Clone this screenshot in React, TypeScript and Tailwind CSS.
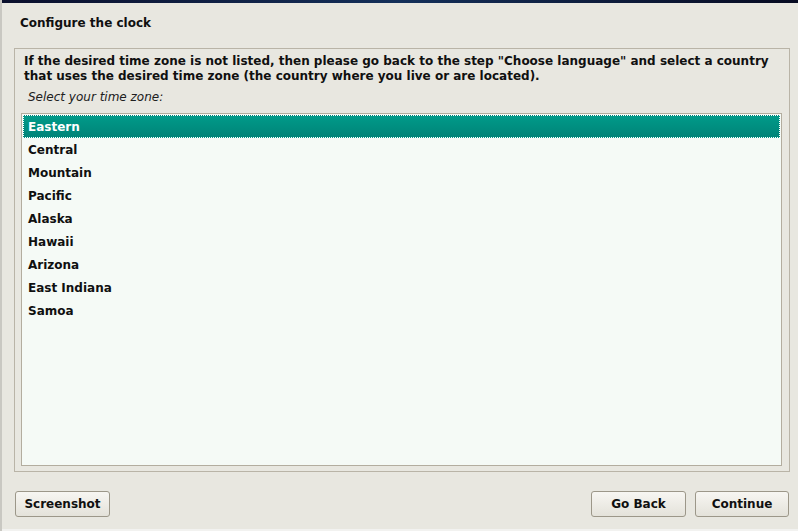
const ZONES = [
  "Eastern",
  "Central",
  "Mountain",
  "Pacific",
  "Alaska",
  "Hawaii",
  "Arizona",
  "East Indiana",
  "Samoa",
];

function Button({ label, className = "" }: { label: string; className?: string }) {
  return (
    <button
      className={
        "h-[26px] rounded-[3px] border border-[#9c9789] bg-gradient-to-b from-[#f7f6f2] to-[#e4e2da] text-[12px] font-bold text-[#101010] " +
        className
      }
    >
      {label}
    </button>
  );
}

export default function App() {
  const selected = 0;

  return (
    <div
      className="flex h-[531px] w-[798px] overflow-hidden bg-[#e8e7e0] text-[#101010]"
      style={{ fontFamily: '"DejaVu Sans", "Liberation Sans", sans-serif' }}
    >
      {/* window edge */}
      <div className="w-[2px] shrink-0 bg-[#c9c8c2]" />

      <div className="flex min-w-0 flex-1 flex-col">
        <div className="h-[3px] shrink-0 bg-gradient-to-r from-[#0a0f2c] via-[#14305a] to-[#070b22]" />

        <div className="flex h-[45px] shrink-0 items-center pl-[18px] pb-[6px] text-[12px] font-bold">
          Configure the clock
        </div>

        <div className="ml-[12px] mr-[8px] flex h-[424px] shrink-0 flex-col border border-[#b9b4a7] pt-[5px]">
          <p className="pl-[9px] text-[12px] font-bold leading-[15px]">
            If the desired time zone is not listed, then please go back to the step "Choose language" and select a country
            <br />
            that uses the desired time zone (the country where you live or are located).
          </p>
          <p className="mt-[6px] pl-[13px] text-[12px] italic leading-[15px] text-[#202020]">
            Select your time zone:
          </p>

          <div className="mb-[5px] ml-[6px] mr-[7px] mt-[8px] flex-1 border border-[#b3ad9f] bg-[#f5faf6] p-px">
            {ZONES.map((z, i) =>
              i === selected ? (
                <div
                  key={z}
                  className="flex h-[23px] items-center border border-dotted border-white bg-gradient-to-b from-[#009a89] to-[#008478] pl-[4px] text-[12px] font-bold text-white"
                >
                  {z}
                </div>
              ) : (
                <div key={z} className="flex h-[23px] items-center pl-[5px] text-[12px] font-bold">
                  {z}
                </div>
              )
            )}
          </div>
        </div>

        <div className="flex flex-1 items-start pl-[13px] pr-[9px] pt-[19px]">
          <Button label="Screenshot" className="w-[95px]" />
          <div className="flex-1" />
          <Button label="Go Back" className="w-[95px]" />
          <Button label="Continue" className="ml-[9px] w-[94px]" />
        </div>

        <div className="h-[2px] shrink-0 bg-[#f2f2f0]" />
      </div>
    </div>
  );
}
